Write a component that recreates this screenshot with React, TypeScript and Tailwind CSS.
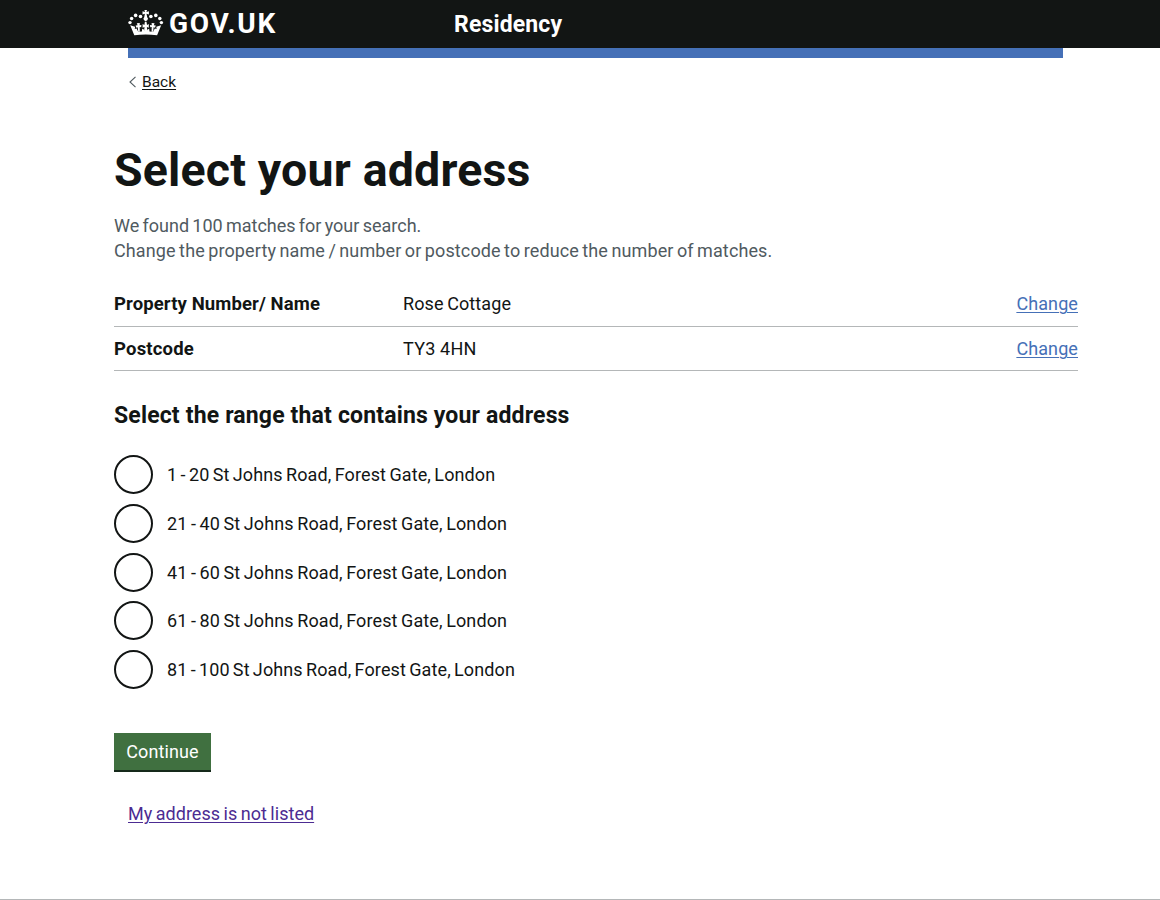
const rows = [
  { label: "Property Number/ Name", value: "Rose Cottage", labelSpacing: "tracking-[0.11px]", valueSpacing: "tracking-[0.1px] [word-spacing:-1px]" },
  { label: "Postcode", value: "TY3 4HN", labelSpacing: "tracking-[0.19px]", valueSpacing: "tracking-[0.3px] [word-spacing:-0.5px]" },
];

const ranges = [
  { text: "1 - 20 St Johns Road, Forest Gate, London", spacing: "[word-spacing:-1.3px]" },
  { text: "21 - 40 St Johns Road, Forest Gate, London", spacing: "[word-spacing:-1.1px]" },
  { text: "41 - 60 St Johns Road, Forest Gate, London", spacing: "[word-spacing:-1.1px]" },
  { text: "61 - 80 St Johns Road, Forest Gate, London", spacing: "[word-spacing:-1.1px]" },
  { text: "81 - 100 St Johns Road, Forest Gate, London", spacing: "[word-spacing:-1.4px]" },
];

function Crown() {
  return (
    <svg width="36" height="28" viewBox="0 0 36 28" fill="white" className="shrink-0">
      <circle cx="2" cy="13.6" r="1.7" />
      <circle cx="3.6" cy="9.4" r="1.75" />
      <circle cx="7.6" cy="6.4" r="1.8" />
      <circle cx="12.5" cy="7.5" r="1.8" />
      <circle cx="33.4" cy="13.6" r="1.7" />
      <circle cx="31.8" cy="9.4" r="1.75" />
      <circle cx="27.8" cy="6.4" r="1.8" />
      <circle cx="22.9" cy="7.5" r="1.8" />
      <path d="M16.4.9H19l-.6 2.2 2.5-.9v3.3l-2.4-.8.7 3.5a2.2 2.2 0 1 1-3 0l.7-3.5-2.4.8V2.2l2.5.9z" />
      <path d="M2.2 16.3 6.3 26.2q11.4-1.5 22.8 0l4.1-9.9-4.9 1.5.3 2.3-1.8-.5-1.6 3.2-3.7-.4-.3-2.6-1.7.7-.7 1.5h-2.2l-.7-1.5-1.7-.7-.3 2.6-3.7.4-1.6-3.2-1.8.5.3-2.3z" />
      <path d="m16.9 12.7-.5 3.4-1.8-1.2v3.8l1.9-.8-.4 4h3.2l-.4-4 1.9.8v-3.8L19 16.1l-.5-3.4zM8.8 14.2l.8 2.1-2 .3.8 2.1 1.4-.5.4 4.5h1.6l-.1-4.7 1.5.3.2-2.3-1.8.2.2-2.3zM26.6 14.2l-.8 2.1 2 .3-.8 2.1-1.4-.5-.4 4.5h-1.6l.1-4.7-1.5.3-.2-2.3 1.8.2-.2-2.3z" />
    </svg>
  );
}

export default function App() {
  return (
    <div className="flex h-[900px] w-[1160px] flex-col overflow-hidden bg-white font-['Roboto',sans-serif] text-[18px] leading-6 text-[#121514]">
      <header className="flex h-12 shrink-0 items-center bg-[#121514] pl-32 text-white">
        <a className="flex h-12 w-[326px] items-center">
          <span className="mb-0.5"><Crown /></span>
          <span className="ml-[5px] text-[28px] font-bold leading-8 tracking-[1.7px]">GOV.UK</span>
        </a>
        <span className="pt-px text-[23px] font-bold tracking-[0.15px]">Residency</span>
      </header>
      <div className="ml-32 h-2.5 w-[935px] shrink-0 bg-[#4570b7]" />
      <a className="ml-32 mt-3.5 flex h-5 w-fit items-center text-[15.5px] leading-5">
        <svg width="14" height="14" viewBox="0 0 14 14" fill="none" stroke="#505a5f" strokeWidth="1.1"><path d="M7.5 1.8 2 7l5.5 5.2" /></svg>
        <span className="underline decoration-1 underline-offset-[2px]">Back</span>
      </a>
      <main className="ml-[114px] flex w-[964px] flex-col items-start">
        <h1 className="mt-[50px] h-14 text-[46.5px] font-bold leading-14 tracking-[0.17px]">Select your address</h1>
        <p className="mt-4 h-[49px] whitespace-nowrap leading-[24.5px] text-[#505a5f]">
          <span className="[word-spacing:-1.2px]">We found 100 matches for your search.</span><br />
          <span className="tracking-[0.12px] [word-spacing:-1.2px]">Change the property name / number or postcode to reduce the number of matches.</span>
        </p>
        <dl className="mt-[19px] w-full">
          {rows.map((row) => (
            <div key={row.label} className="flex h-[44.7px] items-center border-b border-[#b4b7b8]">
              <dt className={`w-[289px] text-[18.5px] font-bold ${row.labelSpacing}`}>{row.label}</dt>
              <dd className={`grow ${row.valueSpacing}`}>{row.value}</dd>
              <dd><a className="tracking-[0.1px] text-[#4570b7] underline decoration-1 underline-offset-2">Change</a></dd>
            </div>
          ))}
        </dl>
        <h2 className="mt-[31px] h-7 text-[23px] font-bold leading-7 tracking-[0.16px]">Select the range that contains your address</h2>
        <div className="mt-[25px] flex flex-col gap-[9.7px]">
          {ranges.map((range) => (
            <label key={range.text} className="flex h-[39px] items-center gap-3.5">
              <input type="radio" name="range" className="size-[39px] appearance-none rounded-full border-2 border-[#121514]" />
              <span className={`pt-px tracking-[0.12px] ${range.spacing}`}>{range.text}</span>
            </label>
          ))}
        </div>
        <button className="mt-11 h-[39px] w-[97px] border-b-2 border-[#15291a] bg-[#407040] pt-px tracking-[0.12px] text-white">Continue</button>
        <a className="ml-3.5 mt-[30px] tracking-[0.02px] text-[#4c2c92] underline decoration-1 underline-offset-2 [word-spacing:-1px]">My address is not listed</a>
      </main>
      <div className="mt-auto h-px w-full shrink-0 bg-[#b4b7b8]" />
    </div>
  );
}
